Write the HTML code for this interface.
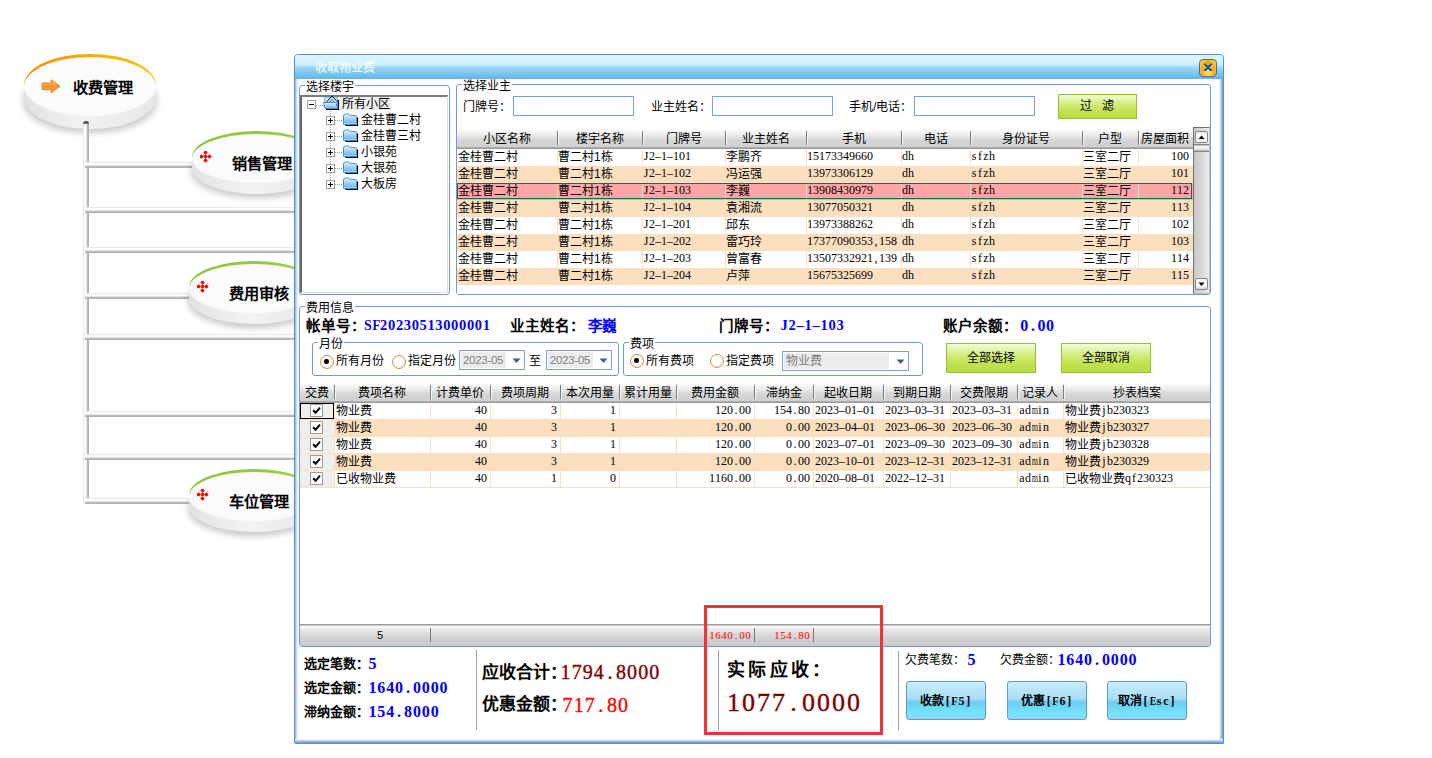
<!DOCTYPE html><html lang="zh-CN"><head><meta charset="utf-8"><title>收取物业费</title><style>
*{margin:0;padding:0;box-sizing:border-box}
html,body{width:1432px;height:758px;overflow:hidden;background:#fff}
body{position:relative;font-family:"Liberation Sans",sans-serif;font-size:12px;color:#000}
div{position:absolute}
.t{white-space:nowrap;line-height:14px;font-size:12px}
.m{font-family:"Liberation Mono",monospace;font-size:11px;letter-spacing:-0.6px;white-space:nowrap;line-height:14px}
.b{font-weight:bold}
.sm{font-family:"Liberation Serif",serif;white-space:nowrap}
.sm i{font-style:normal;display:inline-block;text-align:center}
.hp{height:6px;background:linear-gradient(#dcdcdc 0,#fbfbfb 20%,#fff 45%,#bdbdbd 75%,#a9a9a9 90%,#d8d8d8 100%)}
.vp{width:6px;background:linear-gradient(90deg,#dcdcdc 0,#fbfbfb 20%,#fff 45%,#bdbdbd 75%,#a9a9a9 90%,#d8d8d8 100%)}
.grp{border:1px solid #6d9bd6;border-radius:3px}
.lbl{background:#fff;padding:0 1px;line-height:13px}
.inp{border:1px solid #7aa2d6;background:#fff}
.gbtn{border:1px solid #8fc13a;background:linear-gradient(#f4fbd8 0,#d6ee86 35%,#c2e24e 70%,#b8dc3c 100%);text-align:center;line-height:22px}
.hdr{background:linear-gradient(#fefefe 0,#ececec 30%,#d6d6d6 55%,#d0d0d0 calc(100% - 2px),#c0c0c0 calc(100% - 2px),#9a9a9a calc(100% - 1px),#9a9a9a 100%)}
.sep{width:1px;background:#7a7a7a}
.bbtn{border:1px solid #5b9ad6;border-radius:3px;background:linear-gradient(#c9ecfb 0,#a9def8 45%,#6ccdf0 55%,#74e4fb 85%,#90d7f5 100%);text-align:center;font-weight:bold;line-height:36px}
</style></head><body>
<div style="left:4px;top:48px;width:172px;height:109px"><svg width="172" height="109" viewBox="0 0 172 109">
<defs>
<filter id="fg54" x="-20%" y="-40%" width="140%" height="180%"><feGaussianBlur stdDeviation="3.5"/></filter>
<linearGradient id="sg54" x1="0" y1="0" x2="1" y2="0"><stop offset="0" stop-color="#e2e2e2"/><stop offset="0.45" stop-color="#f3f3f3"/><stop offset="1" stop-color="#e6e6e6"/></linearGradient>
<linearGradient id="rg54" x1="0" y1="0" x2="1" y2="0"><stop offset="0" stop-color="#f29000"/><stop offset="1" stop-color="#ffc400"/></linearGradient>
</defs>
<ellipse cx="86.0" cy="53" rx="67.0" ry="32" fill="#000" opacity="0.22" filter="url(#fg54)"/>
<ellipse cx="86.0" cy="50" rx="66.0" ry="31" fill="url(#sg54)"/>
<rect x="20.0" y="37" width="132" height="13" fill="url(#sg54)"/>
<path d="M 20.0 37 A 66.0 31 0 0 1 152.0 37 Z" fill="url(#rg54)"/>
<ellipse cx="86.0" cy="38.5" rx="66.0" ry="29.5" fill="#fbfbfb"/>
</svg></div>
<div class="t b" style="left:73px;top:79px;font-size:15.2px;line-height:17px">收费管理</div>
<div style="left:41px;top:79px;width:22px;height:16px"><svg width="22" height="16" viewBox="0 0 22 16"><defs><linearGradient id="ag" x1="0" y1="0" x2="0" y2="1"><stop offset="0" stop-color="#fdc07a"/><stop offset="0.5" stop-color="#f8932a"/><stop offset="1" stop-color="#f7a458"/></linearGradient></defs><path d="M1.2 4 H10.2 V0.8 L18.9 7.3 L10.2 13.8 V10.6 H1.2 Z" fill="url(#ag)" stroke="#ea7c1e" stroke-width="1"/></svg></div>
<div class="vp" style="left:83px;top:121px;width:6px;height:383px;border-radius:3px 3px 0 0"></div>
<div style="left:83px;top:121px;width:6px;height:3px;background:linear-gradient(#333,#777);border-radius:3px 3px 0 0"></div>
<div class="hp" style="left:85px;top:162px;width:211px;height:6px;"></div>
<div class="hp" style="left:85px;top:207px;width:211px;height:6px;"></div>
<div class="hp" style="left:85px;top:247px;width:211px;height:6px;"></div>
<div class="hp" style="left:85px;top:293px;width:211px;height:6px;"></div>
<div class="hp" style="left:85px;top:334px;width:211px;height:6px;"></div>
<div class="hp" style="left:85px;top:411px;width:211px;height:6px;"></div>
<div class="hp" style="left:85px;top:454px;width:211px;height:6px;"></div>
<div class="hp" style="left:85px;top:498px;width:211px;height:6px;"></div>
<div style="left:172px;top:125px;width:170px;height:97px"><svg width="170" height="97" viewBox="0 0 170 97">
<defs>
<filter id="fg131" x="-20%" y="-40%" width="140%" height="180%"><feGaussianBlur stdDeviation="3.5"/></filter>
<linearGradient id="sg131" x1="0" y1="0" x2="1" y2="0"><stop offset="0" stop-color="#e2e2e2"/><stop offset="0.45" stop-color="#f3f3f3"/><stop offset="1" stop-color="#e6e6e6"/></linearGradient>
<linearGradient id="rg131" x1="0" y1="0" x2="1" y2="0"><stop offset="0" stop-color="#8bc43a"/><stop offset="1" stop-color="#9fce4a"/></linearGradient>
</defs>
<ellipse cx="85.0" cy="46" rx="66.0" ry="27" fill="#000" opacity="0.22" filter="url(#fg131)"/>
<ellipse cx="85.0" cy="43" rx="65.0" ry="26" fill="url(#sg131)"/>
<rect x="20.0" y="32" width="130" height="11" fill="url(#sg131)"/>
<path d="M 20.0 32 A 65.0 26 0 0 1 150.0 32 Z" fill="url(#rg131)"/>
<ellipse cx="85.0" cy="33.5" rx="65.0" ry="24.5" fill="#fbfbfb"/>
</svg></div>
<div class="t b" style="left:232px;top:155px;font-size:15.2px;line-height:17px">销售管理</div>
<div style="left:200px;top:151px;width:12px;height:12px"><svg width="12" height="12" viewBox="0 0 12 12"><g fill="#f00"><path d="M5.5 -0.7000000000000002 L7.7 1.5 L5.5 3.7 L3.3 1.5 Z"/><circle cx="5.5" cy="1.5" r="1.35"/><path d="M5.5 3.3 L7.7 5.5 L5.5 7.7 L3.3 5.5 Z"/><circle cx="5.5" cy="5.5" r="1.35"/><path d="M5.5 7.3 L7.7 9.5 L5.5 11.7 L3.3 9.5 Z"/><circle cx="5.5" cy="9.5" r="1.35"/><path d="M1.5 3.3 L3.7 5.5 L1.5 7.7 L-0.7000000000000002 5.5 Z"/><circle cx="1.5" cy="5.5" r="1.35"/><path d="M9.5 3.3 L11.7 5.5 L9.5 7.7 L7.3 5.5 Z"/><circle cx="9.5" cy="5.5" r="1.35"/></g></svg></div>
<div style="left:169px;top:255px;width:170px;height:97px"><svg width="170" height="97" viewBox="0 0 170 97">
<defs>
<filter id="fg261" x="-20%" y="-40%" width="140%" height="180%"><feGaussianBlur stdDeviation="3.5"/></filter>
<linearGradient id="sg261" x1="0" y1="0" x2="1" y2="0"><stop offset="0" stop-color="#e2e2e2"/><stop offset="0.45" stop-color="#f3f3f3"/><stop offset="1" stop-color="#e6e6e6"/></linearGradient>
<linearGradient id="rg261" x1="0" y1="0" x2="1" y2="0"><stop offset="0" stop-color="#8bc43a"/><stop offset="1" stop-color="#9fce4a"/></linearGradient>
</defs>
<ellipse cx="85.0" cy="46" rx="66.0" ry="27" fill="#000" opacity="0.22" filter="url(#fg261)"/>
<ellipse cx="85.0" cy="43" rx="65.0" ry="26" fill="url(#sg261)"/>
<rect x="20.0" y="32" width="130" height="11" fill="url(#sg261)"/>
<path d="M 20.0 32 A 65.0 26 0 0 1 150.0 32 Z" fill="url(#rg261)"/>
<ellipse cx="85.0" cy="33.5" rx="65.0" ry="24.5" fill="#fbfbfb"/>
</svg></div>
<div class="t b" style="left:229px;top:285px;font-size:15.2px;line-height:17px">费用审核</div>
<div style="left:197px;top:281px;width:12px;height:12px"><svg width="12" height="12" viewBox="0 0 12 12"><g fill="#f00"><path d="M5.5 -0.7000000000000002 L7.7 1.5 L5.5 3.7 L3.3 1.5 Z"/><circle cx="5.5" cy="1.5" r="1.35"/><path d="M5.5 3.3 L7.7 5.5 L5.5 7.7 L3.3 5.5 Z"/><circle cx="5.5" cy="5.5" r="1.35"/><path d="M5.5 7.3 L7.7 9.5 L5.5 11.7 L3.3 9.5 Z"/><circle cx="5.5" cy="9.5" r="1.35"/><path d="M1.5 3.3 L3.7 5.5 L1.5 7.7 L-0.7000000000000002 5.5 Z"/><circle cx="1.5" cy="5.5" r="1.35"/><path d="M9.5 3.3 L11.7 5.5 L9.5 7.7 L7.3 5.5 Z"/><circle cx="9.5" cy="5.5" r="1.35"/></g></svg></div>
<div style="left:169px;top:463px;width:170px;height:97px"><svg width="170" height="97" viewBox="0 0 170 97">
<defs>
<filter id="fg469" x="-20%" y="-40%" width="140%" height="180%"><feGaussianBlur stdDeviation="3.5"/></filter>
<linearGradient id="sg469" x1="0" y1="0" x2="1" y2="0"><stop offset="0" stop-color="#e2e2e2"/><stop offset="0.45" stop-color="#f3f3f3"/><stop offset="1" stop-color="#e6e6e6"/></linearGradient>
<linearGradient id="rg469" x1="0" y1="0" x2="1" y2="0"><stop offset="0" stop-color="#8bc43a"/><stop offset="1" stop-color="#9fce4a"/></linearGradient>
</defs>
<ellipse cx="85.0" cy="46" rx="66.0" ry="27" fill="#000" opacity="0.22" filter="url(#fg469)"/>
<ellipse cx="85.0" cy="43" rx="65.0" ry="26" fill="url(#sg469)"/>
<rect x="20.0" y="32" width="130" height="11" fill="url(#sg469)"/>
<path d="M 20.0 32 A 65.0 26 0 0 1 150.0 32 Z" fill="url(#rg469)"/>
<ellipse cx="85.0" cy="33.5" rx="65.0" ry="24.5" fill="#fbfbfb"/>
</svg></div>
<div class="t b" style="left:229px;top:493px;font-size:15.2px;line-height:17px">车位管理</div>
<div style="left:197px;top:489px;width:12px;height:12px"><svg width="12" height="12" viewBox="0 0 12 12"><g fill="#f00"><path d="M5.5 -0.7000000000000002 L7.7 1.5 L5.5 3.7 L3.3 1.5 Z"/><circle cx="5.5" cy="1.5" r="1.35"/><path d="M5.5 3.3 L7.7 5.5 L5.5 7.7 L3.3 5.5 Z"/><circle cx="5.5" cy="5.5" r="1.35"/><path d="M5.5 7.3 L7.7 9.5 L5.5 11.7 L3.3 9.5 Z"/><circle cx="5.5" cy="9.5" r="1.35"/><path d="M1.5 3.3 L3.7 5.5 L1.5 7.7 L-0.7000000000000002 5.5 Z"/><circle cx="1.5" cy="5.5" r="1.35"/><path d="M9.5 3.3 L11.7 5.5 L9.5 7.7 L7.3 5.5 Z"/><circle cx="9.5" cy="5.5" r="1.35"/></g></svg></div>
<div style="left:294px;top:54px;width:930px;height:690px;border:1px solid #5a8dd0;border-radius:4px 4px 0 2px;background:linear-gradient(90deg,#8ab0de 0,#b8cfee 1px,#dde8f7 2px,#f6f9fd 3px,#fff 4px,#fff calc(100% - 4px),#dfe8f4 calc(100% - 3px),#b9cce6 calc(100% - 2px),#8ea8cc calc(100% - 1px),#7e9fcc 100%)"></div>
<div style="left:295px;top:739px;width:928px;height:4px;background:linear-gradient(#eef3fa 0,#eef3fa 1px,#c8d7ec 1px,#c8d7ec 2px,#9fb5d8 2px,#9fb5d8 3px,#7f9fcc 3px)"></div>
<div style="left:295px;top:55px;width:928px;height:24px;border-radius:3px 3px 0 0;background:linear-gradient(#e6faff 0,#d6f4fd 1px,#d2f2fc 30%,#c6eaf9 45.8%,#aadcf6 45.8%,#8ccdf1 65%,#6fbeec 88%,#5fb3e8 100%)"></div>
<div class="t" style="left:315px;top:61px;color:#fff;font-size:12px">收取物业费</div>
<div style="left:1199px;top:59px;width:18px;height:18px;border:1px solid #3d6fb0;border-radius:4px;background:radial-gradient(ellipse at 50% 100%,#fff03a 0,#ffc400 35%,#f9a800 60%,#fdd98a 100%)"><svg width="16" height="16" viewBox="0 0 16 16" style="position:absolute;left:0;top:0"><path d="M4.5 5 L11.5 12 M11.5 5 L4.5 12" stroke="#fff" stroke-width="2.2"/><path d="M4.5 4 L11.5 11 M11.5 4 L4.5 11" stroke="#1f4f8f" stroke-width="2.2"/></svg></div>
<div class="grp" style="left:299px;top:85px;width:151px;height:210px;"></div>
<div class="t lbl" style="left:305px;top:81px;">选择楼宇</div>
<div style="left:300px;top:95px;width:148px;height:198px;border-top:2px solid #7a7a7a;border-left:2px solid #6a6a6a;border-right:1px solid #dcdcdc;border-bottom:1px solid #dcdcdc;background:#fff"></div>
<div style="left:311px;top:109px;width:1px;height:1px"></div>
<div style="left:330px;top:111px;width:1px;height:1px;background:#a0a0a0"></div>
<div style="left:330px;top:113px;width:1px;height:1px;background:#a0a0a0"></div>
<div style="left:330px;top:115px;width:1px;height:1px;background:#a0a0a0"></div>
<div style="left:330px;top:117px;width:1px;height:1px;background:#a0a0a0"></div>
<div style="left:330px;top:119px;width:1px;height:1px;background:#a0a0a0"></div>
<div style="left:330px;top:121px;width:1px;height:1px;background:#a0a0a0"></div>
<div style="left:330px;top:123px;width:1px;height:1px;background:#a0a0a0"></div>
<div style="left:330px;top:125px;width:1px;height:1px;background:#a0a0a0"></div>
<div style="left:330px;top:127px;width:1px;height:1px;background:#a0a0a0"></div>
<div style="left:330px;top:129px;width:1px;height:1px;background:#a0a0a0"></div>
<div style="left:330px;top:131px;width:1px;height:1px;background:#a0a0a0"></div>
<div style="left:330px;top:133px;width:1px;height:1px;background:#a0a0a0"></div>
<div style="left:330px;top:135px;width:1px;height:1px;background:#a0a0a0"></div>
<div style="left:330px;top:137px;width:1px;height:1px;background:#a0a0a0"></div>
<div style="left:330px;top:139px;width:1px;height:1px;background:#a0a0a0"></div>
<div style="left:330px;top:141px;width:1px;height:1px;background:#a0a0a0"></div>
<div style="left:330px;top:143px;width:1px;height:1px;background:#a0a0a0"></div>
<div style="left:330px;top:145px;width:1px;height:1px;background:#a0a0a0"></div>
<div style="left:330px;top:147px;width:1px;height:1px;background:#a0a0a0"></div>
<div style="left:330px;top:149px;width:1px;height:1px;background:#a0a0a0"></div>
<div style="left:330px;top:151px;width:1px;height:1px;background:#a0a0a0"></div>
<div style="left:330px;top:153px;width:1px;height:1px;background:#a0a0a0"></div>
<div style="left:330px;top:155px;width:1px;height:1px;background:#a0a0a0"></div>
<div style="left:330px;top:157px;width:1px;height:1px;background:#a0a0a0"></div>
<div style="left:330px;top:159px;width:1px;height:1px;background:#a0a0a0"></div>
<div style="left:330px;top:161px;width:1px;height:1px;background:#a0a0a0"></div>
<div style="left:330px;top:163px;width:1px;height:1px;background:#a0a0a0"></div>
<div style="left:330px;top:165px;width:1px;height:1px;background:#a0a0a0"></div>
<div style="left:330px;top:167px;width:1px;height:1px;background:#a0a0a0"></div>
<div style="left:330px;top:169px;width:1px;height:1px;background:#a0a0a0"></div>
<div style="left:330px;top:171px;width:1px;height:1px;background:#a0a0a0"></div>
<div style="left:330px;top:173px;width:1px;height:1px;background:#a0a0a0"></div>
<div style="left:330px;top:175px;width:1px;height:1px;background:#a0a0a0"></div>
<div style="left:330px;top:177px;width:1px;height:1px;background:#a0a0a0"></div>
<div style="left:330px;top:179px;width:1px;height:1px;background:#a0a0a0"></div>
<div style="left:330px;top:181px;width:1px;height:1px;background:#a0a0a0"></div>
<div style="left:330px;top:183px;width:1px;height:1px;background:#a0a0a0"></div>
<div style="left:316px;top:105px;width:1px;height:1px;background:#a0a0a0"></div>
<div style="left:318px;top:105px;width:1px;height:1px;background:#a0a0a0"></div>
<div style="left:320px;top:105px;width:1px;height:1px;background:#a0a0a0"></div>
<div style="left:322px;top:105px;width:1px;height:1px;background:#a0a0a0"></div>
<div style="left:335px;top:120px;width:1px;height:1px;background:#a0a0a0"></div>
<div style="left:337px;top:120px;width:1px;height:1px;background:#a0a0a0"></div>
<div style="left:339px;top:120px;width:1px;height:1px;background:#a0a0a0"></div>
<div style="left:341px;top:120px;width:1px;height:1px;background:#a0a0a0"></div>
<div style="left:335px;top:136px;width:1px;height:1px;background:#a0a0a0"></div>
<div style="left:337px;top:136px;width:1px;height:1px;background:#a0a0a0"></div>
<div style="left:339px;top:136px;width:1px;height:1px;background:#a0a0a0"></div>
<div style="left:341px;top:136px;width:1px;height:1px;background:#a0a0a0"></div>
<div style="left:335px;top:152px;width:1px;height:1px;background:#a0a0a0"></div>
<div style="left:337px;top:152px;width:1px;height:1px;background:#a0a0a0"></div>
<div style="left:339px;top:152px;width:1px;height:1px;background:#a0a0a0"></div>
<div style="left:341px;top:152px;width:1px;height:1px;background:#a0a0a0"></div>
<div style="left:335px;top:168px;width:1px;height:1px;background:#a0a0a0"></div>
<div style="left:337px;top:168px;width:1px;height:1px;background:#a0a0a0"></div>
<div style="left:339px;top:168px;width:1px;height:1px;background:#a0a0a0"></div>
<div style="left:341px;top:168px;width:1px;height:1px;background:#a0a0a0"></div>
<div style="left:335px;top:184px;width:1px;height:1px;background:#a0a0a0"></div>
<div style="left:337px;top:184px;width:1px;height:1px;background:#a0a0a0"></div>
<div style="left:339px;top:184px;width:1px;height:1px;background:#a0a0a0"></div>
<div style="left:341px;top:184px;width:1px;height:1px;background:#a0a0a0"></div>
<div style="left:307px;top:100px;width:9px;height:9px;border:1px solid #a0a0a0;background:#fff"></div>
<div style="left:309px;top:104px;width:5px;height:1px;background:#000"></div>
<div style="left:323px;top:95px;width:17px;height:16px"><svg width="17" height="16" viewBox="0 0 17 16"><defs><linearGradient id="fo" x1="0" y1="0" x2="0" y2="1"><stop offset="0" stop-color="#e6f3fd"/><stop offset="0.5" stop-color="#a9d2f6"/><stop offset="1" stop-color="#6fb2ea"/></linearGradient></defs><path d="M3 14.5 H15.5 V5" stroke="#000" stroke-width="1.2" fill="none"/><path d="M1.5 3.5 Q1.5 2 3 2 H13 Q14.5 2 14.5 3.5 V13.5 H2.5 Z" fill="#d8ecfb" stroke="#5a9ddf"/><path d="M0.5 7.5 H13 L14.5 13.5 H2 Z" fill="url(#fo)" stroke="#4a8fd6"/><path d="M3.5 7 L9 1 L14.5 7" fill="none" stroke="#111" stroke-width="1"/><g fill="#14a0a0"><rect x="8" y="4" width="1.5" height="1.5"/><rect x="6.5" y="5.5" width="1.5" height="1.5"/><rect x="9.5" y="5.5" width="1.5" height="1.5"/></g></svg></div>
<div style="left:340px;top:97px;width:51px;height:13px;background:#ececec"></div>
<div class="t" style="left:342px;top:97px;">所有小区</div>
<div style="left:326px;top:116px;width:9px;height:9px;border:1px solid #a0a0a0;background:#fff"></div>
<div style="left:328px;top:120px;width:5px;height:1px;background:#000"></div>
<div style="left:330px;top:118px;width:1px;height:5px;background:#000"></div>
<div style="left:343px;top:113px;width:16px;height:14px"><svg width="16" height="14" viewBox="0 0 16 14"><defs><linearGradient id="fc0" x1="0" y1="0" x2="0" y2="1"><stop offset="0" stop-color="#eaf5fe"/><stop offset="0.45" stop-color="#a9d2f6"/><stop offset="0.8" stop-color="#7dbdf0"/><stop offset="1" stop-color="#a6e2fb"/></linearGradient></defs><path d="M2.5 12.5 H14.5 V4.5" stroke="#000" stroke-width="1.2" fill="none"/><path d="M0.5 3 Q0.5 1 2.5 1 H6 L7.5 2.5 H12.5 Q13.5 2.5 13.5 3.5 V11.5 H0.5 Z" fill="url(#fc0)" stroke="#4a8fd6"/></svg></div>
<div class="t" style="left:361px;top:113px;">金桂曹二村</div>
<div style="left:326px;top:132px;width:9px;height:9px;border:1px solid #a0a0a0;background:#fff"></div>
<div style="left:328px;top:136px;width:5px;height:1px;background:#000"></div>
<div style="left:330px;top:134px;width:1px;height:5px;background:#000"></div>
<div style="left:343px;top:129px;width:16px;height:14px"><svg width="16" height="14" viewBox="0 0 16 14"><defs><linearGradient id="fc1" x1="0" y1="0" x2="0" y2="1"><stop offset="0" stop-color="#eaf5fe"/><stop offset="0.45" stop-color="#a9d2f6"/><stop offset="0.8" stop-color="#7dbdf0"/><stop offset="1" stop-color="#a6e2fb"/></linearGradient></defs><path d="M2.5 12.5 H14.5 V4.5" stroke="#000" stroke-width="1.2" fill="none"/><path d="M0.5 3 Q0.5 1 2.5 1 H6 L7.5 2.5 H12.5 Q13.5 2.5 13.5 3.5 V11.5 H0.5 Z" fill="url(#fc1)" stroke="#4a8fd6"/></svg></div>
<div class="t" style="left:361px;top:129px;">金桂曹三村</div>
<div style="left:326px;top:148px;width:9px;height:9px;border:1px solid #a0a0a0;background:#fff"></div>
<div style="left:328px;top:152px;width:5px;height:1px;background:#000"></div>
<div style="left:330px;top:150px;width:1px;height:5px;background:#000"></div>
<div style="left:343px;top:145px;width:16px;height:14px"><svg width="16" height="14" viewBox="0 0 16 14"><defs><linearGradient id="fc2" x1="0" y1="0" x2="0" y2="1"><stop offset="0" stop-color="#eaf5fe"/><stop offset="0.45" stop-color="#a9d2f6"/><stop offset="0.8" stop-color="#7dbdf0"/><stop offset="1" stop-color="#a6e2fb"/></linearGradient></defs><path d="M2.5 12.5 H14.5 V4.5" stroke="#000" stroke-width="1.2" fill="none"/><path d="M0.5 3 Q0.5 1 2.5 1 H6 L7.5 2.5 H12.5 Q13.5 2.5 13.5 3.5 V11.5 H0.5 Z" fill="url(#fc2)" stroke="#4a8fd6"/></svg></div>
<div class="t" style="left:361px;top:145px;">小银苑</div>
<div style="left:326px;top:164px;width:9px;height:9px;border:1px solid #a0a0a0;background:#fff"></div>
<div style="left:328px;top:168px;width:5px;height:1px;background:#000"></div>
<div style="left:330px;top:166px;width:1px;height:5px;background:#000"></div>
<div style="left:343px;top:161px;width:16px;height:14px"><svg width="16" height="14" viewBox="0 0 16 14"><defs><linearGradient id="fc3" x1="0" y1="0" x2="0" y2="1"><stop offset="0" stop-color="#eaf5fe"/><stop offset="0.45" stop-color="#a9d2f6"/><stop offset="0.8" stop-color="#7dbdf0"/><stop offset="1" stop-color="#a6e2fb"/></linearGradient></defs><path d="M2.5 12.5 H14.5 V4.5" stroke="#000" stroke-width="1.2" fill="none"/><path d="M0.5 3 Q0.5 1 2.5 1 H6 L7.5 2.5 H12.5 Q13.5 2.5 13.5 3.5 V11.5 H0.5 Z" fill="url(#fc3)" stroke="#4a8fd6"/></svg></div>
<div class="t" style="left:361px;top:161px;">大银苑</div>
<div style="left:326px;top:180px;width:9px;height:9px;border:1px solid #a0a0a0;background:#fff"></div>
<div style="left:328px;top:184px;width:5px;height:1px;background:#000"></div>
<div style="left:330px;top:182px;width:1px;height:5px;background:#000"></div>
<div style="left:343px;top:177px;width:16px;height:14px"><svg width="16" height="14" viewBox="0 0 16 14"><defs><linearGradient id="fc4" x1="0" y1="0" x2="0" y2="1"><stop offset="0" stop-color="#eaf5fe"/><stop offset="0.45" stop-color="#a9d2f6"/><stop offset="0.8" stop-color="#7dbdf0"/><stop offset="1" stop-color="#a6e2fb"/></linearGradient></defs><path d="M2.5 12.5 H14.5 V4.5" stroke="#000" stroke-width="1.2" fill="none"/><path d="M0.5 3 Q0.5 1 2.5 1 H6 L7.5 2.5 H12.5 Q13.5 2.5 13.5 3.5 V11.5 H0.5 Z" fill="url(#fc4)" stroke="#4a8fd6"/></svg></div>
<div class="t" style="left:361px;top:177px;">大板房</div>
<div class="grp" style="left:456px;top:84px;width:755px;height:211px;"></div>
<div class="t lbl" style="left:462px;top:80px;">选择业主</div>
<div class="t" style="left:463px;top:100px;">门牌号：</div>
<div class="inp" style="left:513px;top:96px;width:121px;height:20px;"></div>
<div class="t" style="left:651px;top:100px;">业主姓名：</div>
<div class="inp" style="left:712px;top:96px;width:121px;height:20px;"></div>
<div class="t" style="left:849px;top:100px;">手机/电话：</div>
<div class="inp" style="left:914px;top:96px;width:121px;height:20px;"></div>
<div class="gbtn" style="left:1058px;top:94px;width:79px;height:25px;">过&nbsp;&nbsp;&nbsp;滤</div>
<div style="left:457px;top:127px;width:753px;height:167px;background:#fff"></div>
<div class="hdr" style="left:457px;top:129px;width:736px;height:20px;"></div>
<div class="t" style="left:457px;top:132px;width:100px;text-align:center">小区名称</div>
<div class="sep" style="left:557px;top:131px;width:1px;height:14px;"></div>
<div style="left:558px;top:131px;width:1px;height:14px;background:rgba(255,255,255,0.8)"></div>
<div class="t" style="left:557px;top:132px;width:85px;text-align:center">楼宇名称</div>
<div class="sep" style="left:642px;top:131px;width:1px;height:14px;"></div>
<div style="left:643px;top:131px;width:1px;height:14px;background:rgba(255,255,255,0.8)"></div>
<div class="t" style="left:642px;top:132px;width:83px;text-align:center">门牌号</div>
<div class="sep" style="left:725px;top:131px;width:1px;height:14px;"></div>
<div style="left:726px;top:131px;width:1px;height:14px;background:rgba(255,255,255,0.8)"></div>
<div class="t" style="left:725px;top:132px;width:81px;text-align:center">业主姓名</div>
<div class="sep" style="left:806px;top:131px;width:1px;height:14px;"></div>
<div style="left:807px;top:131px;width:1px;height:14px;background:rgba(255,255,255,0.8)"></div>
<div class="t" style="left:806px;top:132px;width:95px;text-align:center">手机</div>
<div class="sep" style="left:901px;top:131px;width:1px;height:14px;"></div>
<div style="left:902px;top:131px;width:1px;height:14px;background:rgba(255,255,255,0.8)"></div>
<div class="t" style="left:901px;top:132px;width:69px;text-align:center">电话</div>
<div class="sep" style="left:970px;top:131px;width:1px;height:14px;"></div>
<div style="left:971px;top:131px;width:1px;height:14px;background:rgba(255,255,255,0.8)"></div>
<div class="t" style="left:970px;top:132px;width:112px;text-align:center">身份证号</div>
<div class="sep" style="left:1082px;top:131px;width:1px;height:14px;"></div>
<div style="left:1083px;top:131px;width:1px;height:14px;background:rgba(255,255,255,0.8)"></div>
<div class="t" style="left:1082px;top:132px;width:56px;text-align:center">户型</div>
<div class="sep" style="left:1138px;top:131px;width:1px;height:14px;"></div>
<div style="left:1139px;top:131px;width:1px;height:14px;background:rgba(255,255,255,0.8)"></div>
<div class="t" style="left:1138px;top:132px;width:54px;text-align:center">房屋面积</div>
<div style="left:457px;top:149px;width:736px;height:17px;background:#fff"></div>
<div style="left:557px;top:149px;width:1px;height:17px;background:#fbdfbf"></div>
<div style="left:642px;top:149px;width:1px;height:17px;background:#fbdfbf"></div>
<div style="left:725px;top:149px;width:1px;height:17px;background:#fbdfbf"></div>
<div style="left:806px;top:149px;width:1px;height:17px;background:#fbdfbf"></div>
<div style="left:901px;top:149px;width:1px;height:17px;background:#fbdfbf"></div>
<div style="left:970px;top:149px;width:1px;height:17px;background:#fbdfbf"></div>
<div style="left:1082px;top:149px;width:1px;height:17px;background:#fbdfbf"></div>
<div style="left:1138px;top:149px;width:1px;height:17px;background:#fbdfbf"></div>
<div class="t" style="left:458px;top:150px;">金桂曹二村</div>
<div class="t" style="left:558px;top:150px;">曹二村1栋</div>
<div style="left:643px;top:149px;width:82px;height:17px;overflow:hidden">
<div class="sm" style="left:0px;top:0px;font-size:12px;line-height:14px;"><i style="width:6px">J</i><i style="width:6px">2</i><i style="width:6px">–</i><i style="width:6px">1</i><i style="width:6px">–</i><i style="width:6px">1</i><i style="width:6px">0</i><i style="width:6px">1</i></div>
</div>
<div class="t" style="left:726px;top:150px;">李鹏齐</div>
<div style="left:807px;top:149px;width:94px;height:17px;overflow:hidden">
<div class="sm" style="left:0px;top:0px;font-size:12px;line-height:14px;"><i style="width:6px">1</i><i style="width:6px">5</i><i style="width:6px">1</i><i style="width:6px">7</i><i style="width:6px">3</i><i style="width:6px">3</i><i style="width:6px">4</i><i style="width:6px">9</i><i style="width:6px">6</i><i style="width:6px">6</i><i style="width:6px">0</i></div>
</div>
<div style="left:902px;top:149px;width:68px;height:17px;overflow:hidden">
<div class="sm" style="left:0px;top:0px;font-size:12px;line-height:14px;"><i style="width:6px">d</i><i style="width:6px">h</i></div>
</div>
<div style="left:971px;top:149px;width:111px;height:17px;overflow:hidden">
<div class="sm" style="left:0px;top:0px;font-size:12px;line-height:14px;"><i style="width:6px">s</i><i style="width:6px">f</i><i style="width:6px">z</i><i style="width:6px">h</i></div>
</div>
<div class="t" style="left:1083px;top:150px;">三室二厅</div>
<div class="sm" style="left:1171px;top:149px;font-size:12px;line-height:14px;"><i style="width:6px">1</i><i style="width:6px">0</i><i style="width:6px">0</i></div>
<div style="left:457px;top:166px;width:736px;height:17px;background:#fbdfbf"></div>
<div style="left:557px;top:166px;width:1px;height:17px;background:#fbdfbf"></div>
<div style="left:642px;top:166px;width:1px;height:17px;background:#fbdfbf"></div>
<div style="left:725px;top:166px;width:1px;height:17px;background:#fbdfbf"></div>
<div style="left:806px;top:166px;width:1px;height:17px;background:#fbdfbf"></div>
<div style="left:901px;top:166px;width:1px;height:17px;background:#fbdfbf"></div>
<div style="left:970px;top:166px;width:1px;height:17px;background:#fbdfbf"></div>
<div style="left:1082px;top:166px;width:1px;height:17px;background:#fbdfbf"></div>
<div style="left:1138px;top:166px;width:1px;height:17px;background:#fbdfbf"></div>
<div class="t" style="left:458px;top:167px;">金桂曹二村</div>
<div class="t" style="left:558px;top:167px;">曹二村1栋</div>
<div style="left:643px;top:166px;width:82px;height:17px;overflow:hidden">
<div class="sm" style="left:0px;top:0px;font-size:12px;line-height:14px;"><i style="width:6px">J</i><i style="width:6px">2</i><i style="width:6px">–</i><i style="width:6px">1</i><i style="width:6px">–</i><i style="width:6px">1</i><i style="width:6px">0</i><i style="width:6px">2</i></div>
</div>
<div class="t" style="left:726px;top:167px;">冯运强</div>
<div style="left:807px;top:166px;width:94px;height:17px;overflow:hidden">
<div class="sm" style="left:0px;top:0px;font-size:12px;line-height:14px;"><i style="width:6px">1</i><i style="width:6px">3</i><i style="width:6px">9</i><i style="width:6px">7</i><i style="width:6px">3</i><i style="width:6px">3</i><i style="width:6px">0</i><i style="width:6px">6</i><i style="width:6px">1</i><i style="width:6px">2</i><i style="width:6px">9</i></div>
</div>
<div style="left:902px;top:166px;width:68px;height:17px;overflow:hidden">
<div class="sm" style="left:0px;top:0px;font-size:12px;line-height:14px;"><i style="width:6px">d</i><i style="width:6px">h</i></div>
</div>
<div style="left:971px;top:166px;width:111px;height:17px;overflow:hidden">
<div class="sm" style="left:0px;top:0px;font-size:12px;line-height:14px;"><i style="width:6px">s</i><i style="width:6px">f</i><i style="width:6px">z</i><i style="width:6px">h</i></div>
</div>
<div class="t" style="left:1083px;top:167px;">三室二厅</div>
<div class="sm" style="left:1171px;top:166px;font-size:12px;line-height:14px;"><i style="width:6px">1</i><i style="width:6px">0</i><i style="width:6px">1</i></div>
<div style="left:457px;top:183px;width:736px;height:17px;background:#ffa7a7"></div>
<div style="left:557px;top:183px;width:1px;height:17px;background:#fbdfbf"></div>
<div style="left:642px;top:183px;width:1px;height:17px;background:#fbdfbf"></div>
<div style="left:725px;top:183px;width:1px;height:17px;background:#fbdfbf"></div>
<div style="left:806px;top:183px;width:1px;height:17px;background:#fbdfbf"></div>
<div style="left:901px;top:183px;width:1px;height:17px;background:#fbdfbf"></div>
<div style="left:970px;top:183px;width:1px;height:17px;background:#fbdfbf"></div>
<div style="left:1082px;top:183px;width:1px;height:17px;background:#fbdfbf"></div>
<div style="left:1138px;top:183px;width:1px;height:17px;background:#fbdfbf"></div>
<div style="left:457px;top:183px;width:735px;height:16px;border:1px solid #1f6464"></div>
<div style="left:557px;top:184px;width:1px;height:14px;background:#fbdfbf"></div>
<div style="left:642px;top:184px;width:1px;height:14px;background:#fbdfbf"></div>
<div style="left:725px;top:184px;width:1px;height:14px;background:#fbdfbf"></div>
<div style="left:806px;top:184px;width:1px;height:14px;background:#fbdfbf"></div>
<div style="left:901px;top:184px;width:1px;height:14px;background:#fbdfbf"></div>
<div style="left:970px;top:184px;width:1px;height:14px;background:#fbdfbf"></div>
<div style="left:1082px;top:184px;width:1px;height:14px;background:#fbdfbf"></div>
<div style="left:1138px;top:184px;width:1px;height:14px;background:#fbdfbf"></div>
<div class="t" style="left:458px;top:184px;">金桂曹二村</div>
<div class="t" style="left:558px;top:184px;">曹二村1栋</div>
<div style="left:643px;top:183px;width:82px;height:17px;overflow:hidden">
<div class="sm" style="left:0px;top:0px;font-size:12px;line-height:14px;"><i style="width:6px">J</i><i style="width:6px">2</i><i style="width:6px">–</i><i style="width:6px">1</i><i style="width:6px">–</i><i style="width:6px">1</i><i style="width:6px">0</i><i style="width:6px">3</i></div>
</div>
<div class="t" style="left:726px;top:184px;">李巍</div>
<div style="left:807px;top:183px;width:94px;height:17px;overflow:hidden">
<div class="sm" style="left:0px;top:0px;font-size:12px;line-height:14px;"><i style="width:6px">1</i><i style="width:6px">3</i><i style="width:6px">9</i><i style="width:6px">0</i><i style="width:6px">8</i><i style="width:6px">4</i><i style="width:6px">3</i><i style="width:6px">0</i><i style="width:6px">9</i><i style="width:6px">7</i><i style="width:6px">9</i></div>
</div>
<div style="left:902px;top:183px;width:68px;height:17px;overflow:hidden">
<div class="sm" style="left:0px;top:0px;font-size:12px;line-height:14px;"><i style="width:6px">d</i><i style="width:6px">h</i></div>
</div>
<div style="left:971px;top:183px;width:111px;height:17px;overflow:hidden">
<div class="sm" style="left:0px;top:0px;font-size:12px;line-height:14px;"><i style="width:6px">s</i><i style="width:6px">f</i><i style="width:6px">z</i><i style="width:6px">h</i></div>
</div>
<div class="t" style="left:1083px;top:184px;">三室二厅</div>
<div class="sm" style="left:1171px;top:183px;font-size:12px;line-height:14px;"><i style="width:6px">1</i><i style="width:6px">1</i><i style="width:6px">2</i></div>
<div style="left:457px;top:200px;width:736px;height:17px;background:#fbdfbf"></div>
<div style="left:557px;top:200px;width:1px;height:17px;background:#fbdfbf"></div>
<div style="left:642px;top:200px;width:1px;height:17px;background:#fbdfbf"></div>
<div style="left:725px;top:200px;width:1px;height:17px;background:#fbdfbf"></div>
<div style="left:806px;top:200px;width:1px;height:17px;background:#fbdfbf"></div>
<div style="left:901px;top:200px;width:1px;height:17px;background:#fbdfbf"></div>
<div style="left:970px;top:200px;width:1px;height:17px;background:#fbdfbf"></div>
<div style="left:1082px;top:200px;width:1px;height:17px;background:#fbdfbf"></div>
<div style="left:1138px;top:200px;width:1px;height:17px;background:#fbdfbf"></div>
<div class="t" style="left:458px;top:201px;">金桂曹二村</div>
<div class="t" style="left:558px;top:201px;">曹二村1栋</div>
<div style="left:643px;top:200px;width:82px;height:17px;overflow:hidden">
<div class="sm" style="left:0px;top:0px;font-size:12px;line-height:14px;"><i style="width:6px">J</i><i style="width:6px">2</i><i style="width:6px">–</i><i style="width:6px">1</i><i style="width:6px">–</i><i style="width:6px">1</i><i style="width:6px">0</i><i style="width:6px">4</i></div>
</div>
<div class="t" style="left:726px;top:201px;">袁湘流</div>
<div style="left:807px;top:200px;width:94px;height:17px;overflow:hidden">
<div class="sm" style="left:0px;top:0px;font-size:12px;line-height:14px;"><i style="width:6px">1</i><i style="width:6px">3</i><i style="width:6px">0</i><i style="width:6px">7</i><i style="width:6px">7</i><i style="width:6px">0</i><i style="width:6px">5</i><i style="width:6px">0</i><i style="width:6px">3</i><i style="width:6px">2</i><i style="width:6px">1</i></div>
</div>
<div style="left:902px;top:200px;width:68px;height:17px;overflow:hidden">
<div class="sm" style="left:0px;top:0px;font-size:12px;line-height:14px;"><i style="width:6px">d</i><i style="width:6px">h</i></div>
</div>
<div style="left:971px;top:200px;width:111px;height:17px;overflow:hidden">
<div class="sm" style="left:0px;top:0px;font-size:12px;line-height:14px;"><i style="width:6px">s</i><i style="width:6px">f</i><i style="width:6px">z</i><i style="width:6px">h</i></div>
</div>
<div class="t" style="left:1083px;top:201px;">三室二厅</div>
<div class="sm" style="left:1171px;top:200px;font-size:12px;line-height:14px;"><i style="width:6px">1</i><i style="width:6px">1</i><i style="width:6px">3</i></div>
<div style="left:457px;top:217px;width:736px;height:17px;background:#fff"></div>
<div style="left:557px;top:217px;width:1px;height:17px;background:#fbdfbf"></div>
<div style="left:642px;top:217px;width:1px;height:17px;background:#fbdfbf"></div>
<div style="left:725px;top:217px;width:1px;height:17px;background:#fbdfbf"></div>
<div style="left:806px;top:217px;width:1px;height:17px;background:#fbdfbf"></div>
<div style="left:901px;top:217px;width:1px;height:17px;background:#fbdfbf"></div>
<div style="left:970px;top:217px;width:1px;height:17px;background:#fbdfbf"></div>
<div style="left:1082px;top:217px;width:1px;height:17px;background:#fbdfbf"></div>
<div style="left:1138px;top:217px;width:1px;height:17px;background:#fbdfbf"></div>
<div class="t" style="left:458px;top:218px;">金桂曹二村</div>
<div class="t" style="left:558px;top:218px;">曹二村1栋</div>
<div style="left:643px;top:217px;width:82px;height:17px;overflow:hidden">
<div class="sm" style="left:0px;top:0px;font-size:12px;line-height:14px;"><i style="width:6px">J</i><i style="width:6px">2</i><i style="width:6px">–</i><i style="width:6px">1</i><i style="width:6px">–</i><i style="width:6px">2</i><i style="width:6px">0</i><i style="width:6px">1</i></div>
</div>
<div class="t" style="left:726px;top:218px;">邱东</div>
<div style="left:807px;top:217px;width:94px;height:17px;overflow:hidden">
<div class="sm" style="left:0px;top:0px;font-size:12px;line-height:14px;"><i style="width:6px">1</i><i style="width:6px">3</i><i style="width:6px">9</i><i style="width:6px">7</i><i style="width:6px">3</i><i style="width:6px">3</i><i style="width:6px">8</i><i style="width:6px">8</i><i style="width:6px">2</i><i style="width:6px">6</i><i style="width:6px">2</i></div>
</div>
<div style="left:902px;top:217px;width:68px;height:17px;overflow:hidden">
<div class="sm" style="left:0px;top:0px;font-size:12px;line-height:14px;"><i style="width:6px">d</i><i style="width:6px">h</i></div>
</div>
<div style="left:971px;top:217px;width:111px;height:17px;overflow:hidden">
<div class="sm" style="left:0px;top:0px;font-size:12px;line-height:14px;"><i style="width:6px">s</i><i style="width:6px">f</i><i style="width:6px">z</i><i style="width:6px">h</i></div>
</div>
<div class="t" style="left:1083px;top:218px;">三室二厅</div>
<div class="sm" style="left:1171px;top:217px;font-size:12px;line-height:14px;"><i style="width:6px">1</i><i style="width:6px">0</i><i style="width:6px">2</i></div>
<div style="left:457px;top:234px;width:736px;height:17px;background:#fbdfbf"></div>
<div style="left:557px;top:234px;width:1px;height:17px;background:#fbdfbf"></div>
<div style="left:642px;top:234px;width:1px;height:17px;background:#fbdfbf"></div>
<div style="left:725px;top:234px;width:1px;height:17px;background:#fbdfbf"></div>
<div style="left:806px;top:234px;width:1px;height:17px;background:#fbdfbf"></div>
<div style="left:901px;top:234px;width:1px;height:17px;background:#fbdfbf"></div>
<div style="left:970px;top:234px;width:1px;height:17px;background:#fbdfbf"></div>
<div style="left:1082px;top:234px;width:1px;height:17px;background:#fbdfbf"></div>
<div style="left:1138px;top:234px;width:1px;height:17px;background:#fbdfbf"></div>
<div class="t" style="left:458px;top:235px;">金桂曹二村</div>
<div class="t" style="left:558px;top:235px;">曹二村1栋</div>
<div style="left:643px;top:234px;width:82px;height:17px;overflow:hidden">
<div class="sm" style="left:0px;top:0px;font-size:12px;line-height:14px;"><i style="width:6px">J</i><i style="width:6px">2</i><i style="width:6px">–</i><i style="width:6px">1</i><i style="width:6px">–</i><i style="width:6px">2</i><i style="width:6px">0</i><i style="width:6px">2</i></div>
</div>
<div class="t" style="left:726px;top:235px;">雷巧玲</div>
<div style="left:807px;top:234px;width:94px;height:17px;overflow:hidden">
<div class="sm" style="left:0px;top:0px;font-size:12px;line-height:14px;"><i style="width:6px">1</i><i style="width:6px">7</i><i style="width:6px">3</i><i style="width:6px">7</i><i style="width:6px">7</i><i style="width:6px">0</i><i style="width:6px">9</i><i style="width:6px">0</i><i style="width:6px">3</i><i style="width:6px">5</i><i style="width:6px">3</i><i style="width:6px">,</i><i style="width:6px">1</i><i style="width:6px">5</i><i style="width:6px">8</i></div>
</div>
<div style="left:902px;top:234px;width:68px;height:17px;overflow:hidden">
<div class="sm" style="left:0px;top:0px;font-size:12px;line-height:14px;"><i style="width:6px">d</i><i style="width:6px">h</i></div>
</div>
<div style="left:971px;top:234px;width:111px;height:17px;overflow:hidden">
<div class="sm" style="left:0px;top:0px;font-size:12px;line-height:14px;"><i style="width:6px">s</i><i style="width:6px">f</i><i style="width:6px">z</i><i style="width:6px">h</i></div>
</div>
<div class="t" style="left:1083px;top:235px;">三室二厅</div>
<div class="sm" style="left:1171px;top:234px;font-size:12px;line-height:14px;"><i style="width:6px">1</i><i style="width:6px">0</i><i style="width:6px">3</i></div>
<div style="left:457px;top:251px;width:736px;height:17px;background:#fff"></div>
<div style="left:557px;top:251px;width:1px;height:17px;background:#fbdfbf"></div>
<div style="left:642px;top:251px;width:1px;height:17px;background:#fbdfbf"></div>
<div style="left:725px;top:251px;width:1px;height:17px;background:#fbdfbf"></div>
<div style="left:806px;top:251px;width:1px;height:17px;background:#fbdfbf"></div>
<div style="left:901px;top:251px;width:1px;height:17px;background:#fbdfbf"></div>
<div style="left:970px;top:251px;width:1px;height:17px;background:#fbdfbf"></div>
<div style="left:1082px;top:251px;width:1px;height:17px;background:#fbdfbf"></div>
<div style="left:1138px;top:251px;width:1px;height:17px;background:#fbdfbf"></div>
<div class="t" style="left:458px;top:252px;">金桂曹二村</div>
<div class="t" style="left:558px;top:252px;">曹二村1栋</div>
<div style="left:643px;top:251px;width:82px;height:17px;overflow:hidden">
<div class="sm" style="left:0px;top:0px;font-size:12px;line-height:14px;"><i style="width:6px">J</i><i style="width:6px">2</i><i style="width:6px">–</i><i style="width:6px">1</i><i style="width:6px">–</i><i style="width:6px">2</i><i style="width:6px">0</i><i style="width:6px">3</i></div>
</div>
<div class="t" style="left:726px;top:252px;">曾富春</div>
<div style="left:807px;top:251px;width:94px;height:17px;overflow:hidden">
<div class="sm" style="left:0px;top:0px;font-size:12px;line-height:14px;"><i style="width:6px">1</i><i style="width:6px">3</i><i style="width:6px">5</i><i style="width:6px">0</i><i style="width:6px">7</i><i style="width:6px">3</i><i style="width:6px">3</i><i style="width:6px">2</i><i style="width:6px">9</i><i style="width:6px">2</i><i style="width:6px">1</i><i style="width:6px">,</i><i style="width:6px">1</i><i style="width:6px">3</i><i style="width:6px">9</i></div>
</div>
<div style="left:902px;top:251px;width:68px;height:17px;overflow:hidden">
<div class="sm" style="left:0px;top:0px;font-size:12px;line-height:14px;"><i style="width:6px">d</i><i style="width:6px">h</i></div>
</div>
<div style="left:971px;top:251px;width:111px;height:17px;overflow:hidden">
<div class="sm" style="left:0px;top:0px;font-size:12px;line-height:14px;"><i style="width:6px">s</i><i style="width:6px">f</i><i style="width:6px">z</i><i style="width:6px">h</i></div>
</div>
<div class="t" style="left:1083px;top:252px;">三室二厅</div>
<div class="sm" style="left:1171px;top:251px;font-size:12px;line-height:14px;"><i style="width:6px">1</i><i style="width:6px">1</i><i style="width:6px">4</i></div>
<div style="left:457px;top:268px;width:736px;height:17px;background:#fbdfbf"></div>
<div style="left:557px;top:268px;width:1px;height:17px;background:#fbdfbf"></div>
<div style="left:642px;top:268px;width:1px;height:17px;background:#fbdfbf"></div>
<div style="left:725px;top:268px;width:1px;height:17px;background:#fbdfbf"></div>
<div style="left:806px;top:268px;width:1px;height:17px;background:#fbdfbf"></div>
<div style="left:901px;top:268px;width:1px;height:17px;background:#fbdfbf"></div>
<div style="left:970px;top:268px;width:1px;height:17px;background:#fbdfbf"></div>
<div style="left:1082px;top:268px;width:1px;height:17px;background:#fbdfbf"></div>
<div style="left:1138px;top:268px;width:1px;height:17px;background:#fbdfbf"></div>
<div class="t" style="left:458px;top:269px;">金桂曹二村</div>
<div class="t" style="left:558px;top:269px;">曹二村1栋</div>
<div style="left:643px;top:268px;width:82px;height:17px;overflow:hidden">
<div class="sm" style="left:0px;top:0px;font-size:12px;line-height:14px;"><i style="width:6px">J</i><i style="width:6px">2</i><i style="width:6px">–</i><i style="width:6px">1</i><i style="width:6px">–</i><i style="width:6px">2</i><i style="width:6px">0</i><i style="width:6px">4</i></div>
</div>
<div class="t" style="left:726px;top:269px;">卢萍</div>
<div style="left:807px;top:268px;width:94px;height:17px;overflow:hidden">
<div class="sm" style="left:0px;top:0px;font-size:12px;line-height:14px;"><i style="width:6px">1</i><i style="width:6px">5</i><i style="width:6px">6</i><i style="width:6px">7</i><i style="width:6px">5</i><i style="width:6px">3</i><i style="width:6px">2</i><i style="width:6px">5</i><i style="width:6px">6</i><i style="width:6px">9</i><i style="width:6px">9</i></div>
</div>
<div style="left:902px;top:268px;width:68px;height:17px;overflow:hidden">
<div class="sm" style="left:0px;top:0px;font-size:12px;line-height:14px;"><i style="width:6px">d</i><i style="width:6px">h</i></div>
</div>
<div style="left:971px;top:268px;width:111px;height:17px;overflow:hidden">
<div class="sm" style="left:0px;top:0px;font-size:12px;line-height:14px;"><i style="width:6px">s</i><i style="width:6px">f</i><i style="width:6px">z</i><i style="width:6px">h</i></div>
</div>
<div class="t" style="left:1083px;top:269px;">三室二厅</div>
<div class="sm" style="left:1171px;top:268px;font-size:12px;line-height:14px;"><i style="width:6px">1</i><i style="width:6px">1</i><i style="width:6px">5</i></div>
<div style="left:1193px;top:127px;width:17px;height:167px;border:1px solid #6f6f6f;border-right-color:#c0c0c0;border-bottom-color:#c0c0c0;background:linear-gradient(90deg,#c8c8c8 0,#d4d4d4 40%,#ececec 100%)"></div>
<div style="left:1195px;top:131px;width:13px;height:12px;border:1px solid #888;border-radius:2px;background:linear-gradient(#e8e8e8,#fdfdfd 30%,#f4f4f4)"><svg width="11" height="10" style="position:absolute;left:0;top:0"><path d="M2.5 7 L5.5 3.5 L8.5 7 Z" fill="#000"/></svg></div>
<div style="left:1194px;top:144px;width:15px;height:8px;background:linear-gradient(#888 0,#888 1px,#fafafa 2px,#e0e0e0 6px,#888 7px)"></div>
<div style="left:1195px;top:278px;width:13px;height:12px;border:1px solid #888;border-radius:2px;background:linear-gradient(#f4f4f4,#fdfdfd 60%,#d8d8d8)"><svg width="11" height="10" style="position:absolute;left:0;top:0"><path d="M2.5 3.5 L5.5 7 L8.5 3.5 Z" fill="#000"/></svg></div>
<div class="grp" style="left:299px;top:306px;width:912px;height:341px;"></div>
<div class="t lbl" style="left:305px;top:302px;">费用信息</div>
<div class="t b" style="left:306px;top:318px;font-size:14.5px;line-height:17px;letter-spacing:1.1px">帐单号：</div>
<div class="sm" style="left:364px;top:316px;font-size:14.5px;line-height:18px;font-weight:bold;color:#00f;"><i style="width:7.9px;transform:scaleX(0.980)">S</i><i style="width:7.9px;transform:scaleX(0.892)">F</i><i style="width:7.9px">2</i><i style="width:7.9px">0</i><i style="width:7.9px">2</i><i style="width:7.9px">3</i><i style="width:7.9px">0</i><i style="width:7.9px">5</i><i style="width:7.9px">1</i><i style="width:7.9px">3</i><i style="width:7.9px">0</i><i style="width:7.9px">0</i><i style="width:7.9px">0</i><i style="width:7.9px">0</i><i style="width:7.9px">0</i><i style="width:7.9px">1</i></div>
<div class="t b" style="left:510px;top:318px;font-size:14.5px;line-height:17px;letter-spacing:1.1px">业主姓名：</div>
<div class="t b" style="left:588px;top:318px;font-size:14.5px;line-height:17px;color:#00f">李巍</div>
<div class="t b" style="left:719px;top:318px;font-size:14.5px;line-height:17px;letter-spacing:1.1px">门牌号：</div>
<div class="sm" style="left:780px;top:316px;font-size:14.5px;line-height:18px;font-weight:bold;color:#00f;"><i style="width:8px">J</i><i style="width:8px">2</i><i style="width:8px">–</i><i style="width:8px">1</i><i style="width:8px">–</i><i style="width:8px">1</i><i style="width:8px">0</i><i style="width:8px">3</i></div>
<div class="t b" style="left:943px;top:318px;font-size:14.5px;line-height:17px;letter-spacing:1.1px">账户余额：</div>
<div class="sm" style="left:1020px;top:317px;font-size:16px;line-height:18px;font-weight:bold;color:#00f;"><i style="width:8.6px">0</i><i style="width:8.6px">.</i><i style="width:8.6px">0</i><i style="width:8.6px">0</i></div>
<div class="grp" style="left:312px;top:342px;width:307px;height:34px;"></div>
<div class="t lbl" style="left:318px;top:338px;">月份</div>
<div style="left:320px;top:355px;width:14px;height:14px;border:1.6px solid #d0913c;border-radius:50%;background:radial-gradient(circle at 40% 40%,#fff 0,#fff 40%,#e4e4e4 100%)"><div style="left:3.4px;top:3.4px;width:4.4px;height:4.4px;border-radius:50%;background:#000"></div></div>
<div class="t" style="left:336px;top:354px;">所有月份</div>
<div style="left:392px;top:355px;width:14px;height:14px;border:1.6px solid #d0913c;border-radius:50%;background:radial-gradient(circle at 40% 40%,#fff 0,#fff 40%,#e4e4e4 100%)"></div>
<div class="t" style="left:408px;top:354px;">指定月份</div>
<div class="inp" style="left:459px;top:350px;width:66px;height:20px;"><div style="left:1px;top:1px;width:45px;height:16px;background:#ececec"></div><div class="t" style="left:3px;top:2px;color:#808080;font-size:11.5px;letter-spacing:-0.3px">2023-05</div><svg width="10" height="6" style="position:absolute;left:52px;top:7px"><path d="M0.5 0.5 H8.5 L4.5 5 Z" fill="#3b5f8a"/></svg></div>
<div class="t" style="left:529px;top:354px;">至</div>
<div class="inp" style="left:546px;top:350px;width:66px;height:20px;"><div style="left:1px;top:1px;width:45px;height:16px;background:#ececec"></div><div class="t" style="left:3px;top:2px;color:#808080;font-size:11.5px;letter-spacing:-0.3px">2023-05</div><svg width="10" height="6" style="position:absolute;left:52px;top:7px"><path d="M0.5 0.5 H8.5 L4.5 5 Z" fill="#3b5f8a"/></svg></div>
<div class="grp" style="left:623px;top:342px;width:300px;height:34px;"></div>
<div class="t lbl" style="left:629px;top:338px;">费项</div>
<div style="left:630px;top:354px;width:14px;height:14px;border:1.6px solid #d0913c;border-radius:50%;background:radial-gradient(circle at 40% 40%,#fff 0,#fff 40%,#e4e4e4 100%)"><div style="left:3.4px;top:3.4px;width:4.4px;height:4.4px;border-radius:50%;background:#000"></div></div>
<div class="t" style="left:646px;top:354px;">所有费项</div>
<div style="left:710px;top:354px;width:14px;height:14px;border:1.6px solid #d0913c;border-radius:50%;background:radial-gradient(circle at 40% 40%,#fff 0,#fff 40%,#e4e4e4 100%)"></div>
<div class="t" style="left:726px;top:354px;">指定费项</div>
<div class="inp" style="left:782px;top:351px;width:127px;height:20px;"><div style="left:1px;top:1px;width:105px;height:16px;background:#ececec"></div><div class="t" style="left:3px;top:2px;color:#808080;">物业费</div><svg width="10" height="6" style="position:absolute;left:113px;top:7px"><path d="M0.5 0.5 H8.5 L4.5 5 Z" fill="#3b5f8a"/></svg></div>
<div class="gbtn" style="left:946px;top:343px;width:90px;height:30px;line-height:29px">全部选择</div>
<div class="gbtn" style="left:1061px;top:343px;width:90px;height:30px;line-height:29px">全部取消</div>
<div class="hdr" style="left:300px;top:383px;width:910px;height:20px;"></div>
<div class="t" style="left:300px;top:386px;width:34px;text-align:center">交费</div>
<div class="sep" style="left:334px;top:385px;width:1px;height:14px;"></div>
<div style="left:335px;top:385px;width:1px;height:14px;background:rgba(255,255,255,0.8)"></div>
<div class="t" style="left:334px;top:386px;width:96px;text-align:center">费项名称</div>
<div class="sep" style="left:430px;top:385px;width:1px;height:14px;"></div>
<div style="left:431px;top:385px;width:1px;height:14px;background:rgba(255,255,255,0.8)"></div>
<div class="t" style="left:430px;top:386px;width:60px;text-align:center">计费单价</div>
<div class="sep" style="left:490px;top:385px;width:1px;height:14px;"></div>
<div style="left:491px;top:385px;width:1px;height:14px;background:rgba(255,255,255,0.8)"></div>
<div class="t" style="left:490px;top:386px;width:70px;text-align:center">费项周期</div>
<div class="sep" style="left:560px;top:385px;width:1px;height:14px;"></div>
<div style="left:561px;top:385px;width:1px;height:14px;background:rgba(255,255,255,0.8)"></div>
<div class="t" style="left:560px;top:386px;width:59px;text-align:center">本次用量</div>
<div class="sep" style="left:619px;top:385px;width:1px;height:14px;"></div>
<div style="left:620px;top:385px;width:1px;height:14px;background:rgba(255,255,255,0.8)"></div>
<div class="t" style="left:619px;top:386px;width:57px;text-align:center">累计用量</div>
<div class="sep" style="left:676px;top:385px;width:1px;height:14px;"></div>
<div style="left:677px;top:385px;width:1px;height:14px;background:rgba(255,255,255,0.8)"></div>
<div class="t" style="left:676px;top:386px;width:78px;text-align:center">费用金额</div>
<div class="sep" style="left:754px;top:385px;width:1px;height:14px;"></div>
<div style="left:755px;top:385px;width:1px;height:14px;background:rgba(255,255,255,0.8)"></div>
<div class="t" style="left:754px;top:386px;width:59px;text-align:center">滞纳金</div>
<div class="sep" style="left:813px;top:385px;width:1px;height:14px;"></div>
<div style="left:814px;top:385px;width:1px;height:14px;background:rgba(255,255,255,0.8)"></div>
<div class="t" style="left:813px;top:386px;width:70px;text-align:center">起收日期</div>
<div class="sep" style="left:883px;top:385px;width:1px;height:14px;"></div>
<div style="left:884px;top:385px;width:1px;height:14px;background:rgba(255,255,255,0.8)"></div>
<div class="t" style="left:883px;top:386px;width:67px;text-align:center">到期日期</div>
<div class="sep" style="left:950px;top:385px;width:1px;height:14px;"></div>
<div style="left:951px;top:385px;width:1px;height:14px;background:rgba(255,255,255,0.8)"></div>
<div class="t" style="left:950px;top:386px;width:67px;text-align:center">交费限期</div>
<div class="sep" style="left:1017px;top:385px;width:1px;height:14px;"></div>
<div style="left:1018px;top:385px;width:1px;height:14px;background:rgba(255,255,255,0.8)"></div>
<div class="t" style="left:1017px;top:386px;width:46px;text-align:center">记录人</div>
<div class="sep" style="left:1063px;top:385px;width:1px;height:14px;"></div>
<div style="left:1064px;top:385px;width:1px;height:14px;background:rgba(255,255,255,0.8)"></div>
<div class="t" style="left:1063px;top:386px;width:147px;text-align:center">抄表档案</div>
<div style="left:300px;top:403px;width:910px;height:17px;background:#fff"></div>
<div style="left:300px;top:403px;width:34px;height:17px;background:#efefef"></div>
<div style="left:300px;top:419px;width:910px;height:1px;background:#fbdfbf"></div>
<div style="left:334px;top:403px;width:1px;height:17px;background:#fbdfbf"></div>
<div style="left:430px;top:403px;width:1px;height:17px;background:#fbdfbf"></div>
<div style="left:490px;top:403px;width:1px;height:17px;background:#fbdfbf"></div>
<div style="left:560px;top:403px;width:1px;height:17px;background:#fbdfbf"></div>
<div style="left:619px;top:403px;width:1px;height:17px;background:#fbdfbf"></div>
<div style="left:676px;top:403px;width:1px;height:17px;background:#fbdfbf"></div>
<div style="left:754px;top:403px;width:1px;height:17px;background:#fbdfbf"></div>
<div style="left:813px;top:403px;width:1px;height:17px;background:#fbdfbf"></div>
<div style="left:883px;top:403px;width:1px;height:17px;background:#fbdfbf"></div>
<div style="left:950px;top:403px;width:1px;height:17px;background:#fbdfbf"></div>
<div style="left:1017px;top:403px;width:1px;height:17px;background:#fbdfbf"></div>
<div style="left:1063px;top:403px;width:1px;height:17px;background:#fbdfbf"></div>
<div style="left:310px;top:404px;width:13px;height:13px;border:1px solid #9a9a9a;background:#fff"><svg width="11" height="11" style="position:absolute;left:0;top:0"><path d="M2.2 5.2 L4.6 7.8 L9 2.6" fill="none" stroke="#000" stroke-width="2"/></svg></div>
<div style="left:300px;top:403px;width:34px;height:16px;border:1px solid #000"></div>
<div class="t" style="left:336px;top:404px;">物业费</div>
<div class="sm" style="left:475px;top:403px;font-size:12px;line-height:14px;"><i style="width:6px">4</i><i style="width:6px">0</i></div>
<div class="sm" style="left:551px;top:403px;font-size:12px;line-height:14px;"><i style="width:6px">3</i></div>
<div class="sm" style="left:610px;top:403px;font-size:12px;line-height:14px;"><i style="width:6px">1</i></div>
<div class="sm" style="left:715px;top:403px;font-size:12px;line-height:14px;"><i style="width:6px">1</i><i style="width:6px">2</i><i style="width:6px">0</i><i style="width:6px">.</i><i style="width:6px">0</i><i style="width:6px">0</i></div>
<div class="sm" style="left:774px;top:403px;font-size:12px;line-height:14px;"><i style="width:6px">1</i><i style="width:6px">5</i><i style="width:6px">4</i><i style="width:6px">.</i><i style="width:6px">8</i><i style="width:6px">0</i></div>
<div class="sm" style="left:815px;top:403px;font-size:12px;line-height:14px;"><i style="width:6px">2</i><i style="width:6px">0</i><i style="width:6px">2</i><i style="width:6px">3</i><i style="width:6px">–</i><i style="width:6px">0</i><i style="width:6px">1</i><i style="width:6px">–</i><i style="width:6px">0</i><i style="width:6px">1</i></div>
<div class="sm" style="left:885px;top:403px;font-size:12px;line-height:14px;"><i style="width:6px">2</i><i style="width:6px">0</i><i style="width:6px">2</i><i style="width:6px">3</i><i style="width:6px">–</i><i style="width:6px">0</i><i style="width:6px">3</i><i style="width:6px">–</i><i style="width:6px">3</i><i style="width:6px">1</i></div>
<div class="sm" style="left:952px;top:403px;font-size:12px;line-height:14px;"><i style="width:6px">2</i><i style="width:6px">0</i><i style="width:6px">2</i><i style="width:6px">3</i><i style="width:6px">–</i><i style="width:6px">0</i><i style="width:6px">3</i><i style="width:6px">–</i><i style="width:6px">3</i><i style="width:6px">1</i></div>
<div class="sm" style="left:1019px;top:403px;font-size:12px;line-height:14px;"><i style="width:6px">a</i><i style="width:6px">d</i><i style="width:6px;transform:scaleX(0.643)">m</i><i style="width:6px">i</i><i style="width:6px">n</i></div>
<div class="t" style="left:1065px;top:404px;">物业费</div>
<div class="sm" style="left:1101px;top:403px;font-size:12px;line-height:14px;"><i style="width:6px">j</i><i style="width:6px">b</i><i style="width:6px">2</i><i style="width:6px">3</i><i style="width:6px">0</i><i style="width:6px">3</i><i style="width:6px">2</i><i style="width:6px">3</i></div>
<div style="left:300px;top:420px;width:910px;height:17px;background:#fbdfbf"></div>
<div style="left:300px;top:420px;width:34px;height:17px;background:#efefef"></div>
<div style="left:300px;top:436px;width:910px;height:1px;background:#fbdfbf"></div>
<div style="left:334px;top:420px;width:1px;height:17px;background:#fbdfbf"></div>
<div style="left:430px;top:420px;width:1px;height:17px;background:#fbdfbf"></div>
<div style="left:490px;top:420px;width:1px;height:17px;background:#fbdfbf"></div>
<div style="left:560px;top:420px;width:1px;height:17px;background:#fbdfbf"></div>
<div style="left:619px;top:420px;width:1px;height:17px;background:#fbdfbf"></div>
<div style="left:676px;top:420px;width:1px;height:17px;background:#fbdfbf"></div>
<div style="left:754px;top:420px;width:1px;height:17px;background:#fbdfbf"></div>
<div style="left:813px;top:420px;width:1px;height:17px;background:#fbdfbf"></div>
<div style="left:883px;top:420px;width:1px;height:17px;background:#fbdfbf"></div>
<div style="left:950px;top:420px;width:1px;height:17px;background:#fbdfbf"></div>
<div style="left:1017px;top:420px;width:1px;height:17px;background:#fbdfbf"></div>
<div style="left:1063px;top:420px;width:1px;height:17px;background:#fbdfbf"></div>
<div style="left:310px;top:421px;width:13px;height:13px;border:1px solid #9a9a9a;background:#fff"><svg width="11" height="11" style="position:absolute;left:0;top:0"><path d="M2.2 5.2 L4.6 7.8 L9 2.6" fill="none" stroke="#000" stroke-width="2"/></svg></div>
<div class="t" style="left:336px;top:421px;">物业费</div>
<div class="sm" style="left:475px;top:420px;font-size:12px;line-height:14px;"><i style="width:6px">4</i><i style="width:6px">0</i></div>
<div class="sm" style="left:551px;top:420px;font-size:12px;line-height:14px;"><i style="width:6px">3</i></div>
<div class="sm" style="left:610px;top:420px;font-size:12px;line-height:14px;"><i style="width:6px">1</i></div>
<div class="sm" style="left:715px;top:420px;font-size:12px;line-height:14px;"><i style="width:6px">1</i><i style="width:6px">2</i><i style="width:6px">0</i><i style="width:6px">.</i><i style="width:6px">0</i><i style="width:6px">0</i></div>
<div class="sm" style="left:786px;top:420px;font-size:12px;line-height:14px;"><i style="width:6px">0</i><i style="width:6px">.</i><i style="width:6px">0</i><i style="width:6px">0</i></div>
<div class="sm" style="left:815px;top:420px;font-size:12px;line-height:14px;"><i style="width:6px">2</i><i style="width:6px">0</i><i style="width:6px">2</i><i style="width:6px">3</i><i style="width:6px">–</i><i style="width:6px">0</i><i style="width:6px">4</i><i style="width:6px">–</i><i style="width:6px">0</i><i style="width:6px">1</i></div>
<div class="sm" style="left:885px;top:420px;font-size:12px;line-height:14px;"><i style="width:6px">2</i><i style="width:6px">0</i><i style="width:6px">2</i><i style="width:6px">3</i><i style="width:6px">–</i><i style="width:6px">0</i><i style="width:6px">6</i><i style="width:6px">–</i><i style="width:6px">3</i><i style="width:6px">0</i></div>
<div class="sm" style="left:952px;top:420px;font-size:12px;line-height:14px;"><i style="width:6px">2</i><i style="width:6px">0</i><i style="width:6px">2</i><i style="width:6px">3</i><i style="width:6px">–</i><i style="width:6px">0</i><i style="width:6px">6</i><i style="width:6px">–</i><i style="width:6px">3</i><i style="width:6px">0</i></div>
<div class="sm" style="left:1019px;top:420px;font-size:12px;line-height:14px;"><i style="width:6px">a</i><i style="width:6px">d</i><i style="width:6px;transform:scaleX(0.643)">m</i><i style="width:6px">i</i><i style="width:6px">n</i></div>
<div class="t" style="left:1065px;top:421px;">物业费</div>
<div class="sm" style="left:1101px;top:420px;font-size:12px;line-height:14px;"><i style="width:6px">j</i><i style="width:6px">b</i><i style="width:6px">2</i><i style="width:6px">3</i><i style="width:6px">0</i><i style="width:6px">3</i><i style="width:6px">2</i><i style="width:6px">7</i></div>
<div style="left:300px;top:437px;width:910px;height:17px;background:#fff"></div>
<div style="left:300px;top:437px;width:34px;height:17px;background:#efefef"></div>
<div style="left:300px;top:453px;width:910px;height:1px;background:#fbdfbf"></div>
<div style="left:334px;top:437px;width:1px;height:17px;background:#fbdfbf"></div>
<div style="left:430px;top:437px;width:1px;height:17px;background:#fbdfbf"></div>
<div style="left:490px;top:437px;width:1px;height:17px;background:#fbdfbf"></div>
<div style="left:560px;top:437px;width:1px;height:17px;background:#fbdfbf"></div>
<div style="left:619px;top:437px;width:1px;height:17px;background:#fbdfbf"></div>
<div style="left:676px;top:437px;width:1px;height:17px;background:#fbdfbf"></div>
<div style="left:754px;top:437px;width:1px;height:17px;background:#fbdfbf"></div>
<div style="left:813px;top:437px;width:1px;height:17px;background:#fbdfbf"></div>
<div style="left:883px;top:437px;width:1px;height:17px;background:#fbdfbf"></div>
<div style="left:950px;top:437px;width:1px;height:17px;background:#fbdfbf"></div>
<div style="left:1017px;top:437px;width:1px;height:17px;background:#fbdfbf"></div>
<div style="left:1063px;top:437px;width:1px;height:17px;background:#fbdfbf"></div>
<div style="left:310px;top:438px;width:13px;height:13px;border:1px solid #9a9a9a;background:#fff"><svg width="11" height="11" style="position:absolute;left:0;top:0"><path d="M2.2 5.2 L4.6 7.8 L9 2.6" fill="none" stroke="#000" stroke-width="2"/></svg></div>
<div class="t" style="left:336px;top:438px;">物业费</div>
<div class="sm" style="left:475px;top:437px;font-size:12px;line-height:14px;"><i style="width:6px">4</i><i style="width:6px">0</i></div>
<div class="sm" style="left:551px;top:437px;font-size:12px;line-height:14px;"><i style="width:6px">3</i></div>
<div class="sm" style="left:610px;top:437px;font-size:12px;line-height:14px;"><i style="width:6px">1</i></div>
<div class="sm" style="left:715px;top:437px;font-size:12px;line-height:14px;"><i style="width:6px">1</i><i style="width:6px">2</i><i style="width:6px">0</i><i style="width:6px">.</i><i style="width:6px">0</i><i style="width:6px">0</i></div>
<div class="sm" style="left:786px;top:437px;font-size:12px;line-height:14px;"><i style="width:6px">0</i><i style="width:6px">.</i><i style="width:6px">0</i><i style="width:6px">0</i></div>
<div class="sm" style="left:815px;top:437px;font-size:12px;line-height:14px;"><i style="width:6px">2</i><i style="width:6px">0</i><i style="width:6px">2</i><i style="width:6px">3</i><i style="width:6px">–</i><i style="width:6px">0</i><i style="width:6px">7</i><i style="width:6px">–</i><i style="width:6px">0</i><i style="width:6px">1</i></div>
<div class="sm" style="left:885px;top:437px;font-size:12px;line-height:14px;"><i style="width:6px">2</i><i style="width:6px">0</i><i style="width:6px">2</i><i style="width:6px">3</i><i style="width:6px">–</i><i style="width:6px">0</i><i style="width:6px">9</i><i style="width:6px">–</i><i style="width:6px">3</i><i style="width:6px">0</i></div>
<div class="sm" style="left:952px;top:437px;font-size:12px;line-height:14px;"><i style="width:6px">2</i><i style="width:6px">0</i><i style="width:6px">2</i><i style="width:6px">3</i><i style="width:6px">–</i><i style="width:6px">0</i><i style="width:6px">9</i><i style="width:6px">–</i><i style="width:6px">3</i><i style="width:6px">0</i></div>
<div class="sm" style="left:1019px;top:437px;font-size:12px;line-height:14px;"><i style="width:6px">a</i><i style="width:6px">d</i><i style="width:6px;transform:scaleX(0.643)">m</i><i style="width:6px">i</i><i style="width:6px">n</i></div>
<div class="t" style="left:1065px;top:438px;">物业费</div>
<div class="sm" style="left:1101px;top:437px;font-size:12px;line-height:14px;"><i style="width:6px">j</i><i style="width:6px">b</i><i style="width:6px">2</i><i style="width:6px">3</i><i style="width:6px">0</i><i style="width:6px">3</i><i style="width:6px">2</i><i style="width:6px">8</i></div>
<div style="left:300px;top:454px;width:910px;height:17px;background:#fbdfbf"></div>
<div style="left:300px;top:454px;width:34px;height:17px;background:#efefef"></div>
<div style="left:300px;top:470px;width:910px;height:1px;background:#fbdfbf"></div>
<div style="left:334px;top:454px;width:1px;height:17px;background:#fbdfbf"></div>
<div style="left:430px;top:454px;width:1px;height:17px;background:#fbdfbf"></div>
<div style="left:490px;top:454px;width:1px;height:17px;background:#fbdfbf"></div>
<div style="left:560px;top:454px;width:1px;height:17px;background:#fbdfbf"></div>
<div style="left:619px;top:454px;width:1px;height:17px;background:#fbdfbf"></div>
<div style="left:676px;top:454px;width:1px;height:17px;background:#fbdfbf"></div>
<div style="left:754px;top:454px;width:1px;height:17px;background:#fbdfbf"></div>
<div style="left:813px;top:454px;width:1px;height:17px;background:#fbdfbf"></div>
<div style="left:883px;top:454px;width:1px;height:17px;background:#fbdfbf"></div>
<div style="left:950px;top:454px;width:1px;height:17px;background:#fbdfbf"></div>
<div style="left:1017px;top:454px;width:1px;height:17px;background:#fbdfbf"></div>
<div style="left:1063px;top:454px;width:1px;height:17px;background:#fbdfbf"></div>
<div style="left:310px;top:455px;width:13px;height:13px;border:1px solid #9a9a9a;background:#fff"><svg width="11" height="11" style="position:absolute;left:0;top:0"><path d="M2.2 5.2 L4.6 7.8 L9 2.6" fill="none" stroke="#000" stroke-width="2"/></svg></div>
<div class="t" style="left:336px;top:455px;">物业费</div>
<div class="sm" style="left:475px;top:454px;font-size:12px;line-height:14px;"><i style="width:6px">4</i><i style="width:6px">0</i></div>
<div class="sm" style="left:551px;top:454px;font-size:12px;line-height:14px;"><i style="width:6px">3</i></div>
<div class="sm" style="left:610px;top:454px;font-size:12px;line-height:14px;"><i style="width:6px">1</i></div>
<div class="sm" style="left:715px;top:454px;font-size:12px;line-height:14px;"><i style="width:6px">1</i><i style="width:6px">2</i><i style="width:6px">0</i><i style="width:6px">.</i><i style="width:6px">0</i><i style="width:6px">0</i></div>
<div class="sm" style="left:786px;top:454px;font-size:12px;line-height:14px;"><i style="width:6px">0</i><i style="width:6px">.</i><i style="width:6px">0</i><i style="width:6px">0</i></div>
<div class="sm" style="left:815px;top:454px;font-size:12px;line-height:14px;"><i style="width:6px">2</i><i style="width:6px">0</i><i style="width:6px">2</i><i style="width:6px">3</i><i style="width:6px">–</i><i style="width:6px">1</i><i style="width:6px">0</i><i style="width:6px">–</i><i style="width:6px">0</i><i style="width:6px">1</i></div>
<div class="sm" style="left:885px;top:454px;font-size:12px;line-height:14px;"><i style="width:6px">2</i><i style="width:6px">0</i><i style="width:6px">2</i><i style="width:6px">3</i><i style="width:6px">–</i><i style="width:6px">1</i><i style="width:6px">2</i><i style="width:6px">–</i><i style="width:6px">3</i><i style="width:6px">1</i></div>
<div class="sm" style="left:952px;top:454px;font-size:12px;line-height:14px;"><i style="width:6px">2</i><i style="width:6px">0</i><i style="width:6px">2</i><i style="width:6px">3</i><i style="width:6px">–</i><i style="width:6px">1</i><i style="width:6px">2</i><i style="width:6px">–</i><i style="width:6px">3</i><i style="width:6px">1</i></div>
<div class="sm" style="left:1019px;top:454px;font-size:12px;line-height:14px;"><i style="width:6px">a</i><i style="width:6px">d</i><i style="width:6px;transform:scaleX(0.643)">m</i><i style="width:6px">i</i><i style="width:6px">n</i></div>
<div class="t" style="left:1065px;top:455px;">物业费</div>
<div class="sm" style="left:1101px;top:454px;font-size:12px;line-height:14px;"><i style="width:6px">j</i><i style="width:6px">b</i><i style="width:6px">2</i><i style="width:6px">3</i><i style="width:6px">0</i><i style="width:6px">3</i><i style="width:6px">2</i><i style="width:6px">9</i></div>
<div style="left:300px;top:471px;width:910px;height:17px;background:#fff"></div>
<div style="left:300px;top:471px;width:34px;height:17px;background:#efefef"></div>
<div style="left:300px;top:487px;width:910px;height:1px;background:#fbdfbf"></div>
<div style="left:334px;top:471px;width:1px;height:17px;background:#fbdfbf"></div>
<div style="left:430px;top:471px;width:1px;height:17px;background:#fbdfbf"></div>
<div style="left:490px;top:471px;width:1px;height:17px;background:#fbdfbf"></div>
<div style="left:560px;top:471px;width:1px;height:17px;background:#fbdfbf"></div>
<div style="left:619px;top:471px;width:1px;height:17px;background:#fbdfbf"></div>
<div style="left:676px;top:471px;width:1px;height:17px;background:#fbdfbf"></div>
<div style="left:754px;top:471px;width:1px;height:17px;background:#fbdfbf"></div>
<div style="left:813px;top:471px;width:1px;height:17px;background:#fbdfbf"></div>
<div style="left:883px;top:471px;width:1px;height:17px;background:#fbdfbf"></div>
<div style="left:950px;top:471px;width:1px;height:17px;background:#fbdfbf"></div>
<div style="left:1017px;top:471px;width:1px;height:17px;background:#fbdfbf"></div>
<div style="left:1063px;top:471px;width:1px;height:17px;background:#fbdfbf"></div>
<div style="left:310px;top:472px;width:13px;height:13px;border:1px solid #9a9a9a;background:#fff"><svg width="11" height="11" style="position:absolute;left:0;top:0"><path d="M2.2 5.2 L4.6 7.8 L9 2.6" fill="none" stroke="#000" stroke-width="2"/></svg></div>
<div class="t" style="left:336px;top:472px;">已收物业费</div>
<div class="sm" style="left:475px;top:471px;font-size:12px;line-height:14px;"><i style="width:6px">4</i><i style="width:6px">0</i></div>
<div class="sm" style="left:551px;top:471px;font-size:12px;line-height:14px;"><i style="width:6px">1</i></div>
<div class="sm" style="left:610px;top:471px;font-size:12px;line-height:14px;"><i style="width:6px">0</i></div>
<div class="sm" style="left:709px;top:471px;font-size:12px;line-height:14px;"><i style="width:6px">1</i><i style="width:6px">1</i><i style="width:6px">6</i><i style="width:6px">0</i><i style="width:6px">.</i><i style="width:6px">0</i><i style="width:6px">0</i></div>
<div class="sm" style="left:786px;top:471px;font-size:12px;line-height:14px;"><i style="width:6px">0</i><i style="width:6px">.</i><i style="width:6px">0</i><i style="width:6px">0</i></div>
<div class="sm" style="left:815px;top:471px;font-size:12px;line-height:14px;"><i style="width:6px">2</i><i style="width:6px">0</i><i style="width:6px">2</i><i style="width:6px">0</i><i style="width:6px">–</i><i style="width:6px">0</i><i style="width:6px">8</i><i style="width:6px">–</i><i style="width:6px">0</i><i style="width:6px">1</i></div>
<div class="sm" style="left:885px;top:471px;font-size:12px;line-height:14px;"><i style="width:6px">2</i><i style="width:6px">0</i><i style="width:6px">2</i><i style="width:6px">2</i><i style="width:6px">–</i><i style="width:6px">1</i><i style="width:6px">2</i><i style="width:6px">–</i><i style="width:6px">3</i><i style="width:6px">1</i></div>
<div class="sm" style="left:1019px;top:471px;font-size:12px;line-height:14px;"><i style="width:6px">a</i><i style="width:6px">d</i><i style="width:6px;transform:scaleX(0.643)">m</i><i style="width:6px">i</i><i style="width:6px">n</i></div>
<div class="t" style="left:1065px;top:472px;">已收物业费</div>
<div class="sm" style="left:1125px;top:471px;font-size:12px;line-height:14px;"><i style="width:6px">q</i><i style="width:6px">f</i><i style="width:6px">2</i><i style="width:6px">3</i><i style="width:6px">0</i><i style="width:6px">3</i><i style="width:6px">2</i><i style="width:6px">3</i></div>
<div style="left:300px;top:624px;width:910px;height:22px;background:linear-gradient(#9a9a9a 0,#9a9a9a 1px,#fafafa 2px,#e6e6e6 30%,#d2d2d2 60%,#cacaca 100%)"></div>
<div class="t" style="left:377px;top:628px;font-size:11px">5</div>
<div class="sep" style="left:430px;top:628px;width:1px;height:14px;"></div>
<div class="sm" style="left:709px;top:628px;font-size:11px;line-height:14px;color:#f00;"><i style="width:6px">1</i><i style="width:6px">6</i><i style="width:6px">4</i><i style="width:6px">0</i><i style="width:6px">.</i><i style="width:6px">0</i><i style="width:6px">0</i></div>
<div class="sep" style="left:754px;top:628px;width:1px;height:14px;"></div>
<div class="sm" style="left:774px;top:628px;font-size:11px;line-height:14px;color:#f00;"><i style="width:6px">1</i><i style="width:6px">5</i><i style="width:6px">4</i><i style="width:6px">.</i><i style="width:6px">8</i><i style="width:6px">0</i></div>
<div class="sep" style="left:813px;top:628px;width:1px;height:14px;"></div>
<div class="t b" style="left:304px;top:656px;font-size:13px;line-height:15px">选定笔数：</div>
<div class="sm" style="left:368px;top:655px;font-size:16px;line-height:18px;font-weight:bold;color:#00f;"><i style="width:8.9px">5</i></div>
<div class="t b" style="left:304px;top:680px;font-size:13px;line-height:15px">选定金额：</div>
<div class="sm" style="left:368px;top:679px;font-size:16px;line-height:18px;font-weight:bold;color:#00f;"><i style="width:8.9px">1</i><i style="width:8.9px">6</i><i style="width:8.9px">4</i><i style="width:8.9px">0</i><i style="width:8.9px">.</i><i style="width:8.9px">0</i><i style="width:8.9px">0</i><i style="width:8.9px">0</i><i style="width:8.9px">0</i></div>
<div class="t b" style="left:304px;top:704px;font-size:13px;line-height:15px">滞纳金额：</div>
<div class="sm" style="left:368px;top:703px;font-size:16px;line-height:18px;font-weight:bold;color:#00f;"><i style="width:8.9px">1</i><i style="width:8.9px">5</i><i style="width:8.9px">4</i><i style="width:8.9px">.</i><i style="width:8.9px">8</i><i style="width:8.9px">0</i><i style="width:8.9px">0</i><i style="width:8.9px">0</i></div>
<div style="left:476px;top:650px;width:1px;height:80px;background:#a0a0a0"></div>
<div class="t b" style="left:482px;top:663px;font-size:17px;line-height:19px">应收合计：</div>
<div class="sm" style="left:560px;top:661px;font-size:20px;line-height:22px;color:#800000;-webkit-text-stroke:0.35px currentColor"><i style="width:11.1px">1</i><i style="width:11.1px">7</i><i style="width:11.1px">9</i><i style="width:11.1px">4</i><i style="width:11.1px">.</i><i style="width:11.1px">8</i><i style="width:11.1px">0</i><i style="width:11.1px">0</i><i style="width:11.1px">0</i></div>
<div class="t b" style="left:482px;top:695px;font-size:17px;line-height:19px">优惠金额：</div>
<div class="sm" style="left:562px;top:694px;font-size:20px;line-height:22px;color:#f00;-webkit-text-stroke:0.35px currentColor"><i style="width:11.1px">7</i><i style="width:11.1px">1</i><i style="width:11.1px">7</i><i style="width:11.1px">.</i><i style="width:11.1px">8</i><i style="width:11.1px">0</i></div>
<div style="left:718px;top:650px;width:1px;height:80px;background:#a0a0a0"></div>
<div class="t" style="left:727px;top:660px;font-size:18px;line-height:20px;letter-spacing:3.3px;font-weight:600">实际应收：</div>
<div class="sm" style="left:726px;top:688px;font-size:26px;line-height:30px;color:#800000;-webkit-text-stroke:0.35px currentColor"><i style="width:15px">1</i><i style="width:15px">0</i><i style="width:15px">7</i><i style="width:15px">7</i><i style="width:15px">.</i><i style="width:15px">0</i><i style="width:15px">0</i><i style="width:15px">0</i><i style="width:15px">0</i></div>
<div style="left:704px;top:605px;width:179px;height:130px;border:3px solid #ee3535"></div>
<div style="left:898px;top:651px;width:1px;height:79px;background:#a0a0a0"></div>
<div class="t" style="left:905px;top:653px;">欠费笔数：</div>
<div class="sm" style="left:967px;top:651px;font-size:16px;line-height:18px;font-weight:bold;color:#00f;"><i style="width:8.9px">5</i></div>
<div class="t" style="left:1000px;top:653px;">欠费金额：</div>
<div class="sm" style="left:1057px;top:651px;font-size:16px;line-height:18px;font-weight:bold;color:#00f;"><i style="width:8.9px">1</i><i style="width:8.9px">6</i><i style="width:8.9px">4</i><i style="width:8.9px">0</i><i style="width:8.9px">.</i><i style="width:8.9px">0</i><i style="width:8.9px">0</i><i style="width:8.9px">0</i><i style="width:8.9px">0</i></div>
<div class="bbtn" style="left:906px;top:681px;width:80px;height:39px;"><div class="t b" style="left:0;top:12px;width:78px;text-align:center;line-height:14px">收款<span class="sm" style="font-weight:bold"><i style="width:6.8px">[</i><i style="width:6.8px;transform:scaleX(0.891)">F</i><i style="width:6.8px">5</i><i style="width:6.8px">]</i></span></div></div>
<div class="bbtn" style="left:1007px;top:681px;width:80px;height:39px;"><div class="t b" style="left:0;top:12px;width:78px;text-align:center;line-height:14px">优惠<span class="sm" style="font-weight:bold"><i style="width:6.8px">[</i><i style="width:6.8px;transform:scaleX(0.891)">F</i><i style="width:6.8px">6</i><i style="width:6.8px">]</i></span></div></div>
<div class="bbtn" style="left:1107px;top:681px;width:80px;height:39px;"><div class="t b" style="left:0;top:12px;width:78px;text-align:center;line-height:14px">取消<span class="sm" style="font-weight:bold"><i style="width:6.8px">[</i><i style="width:6.8px;transform:scaleX(0.816)">E</i><i style="width:6.8px">s</i><i style="width:6.8px">c</i><i style="width:6.8px">]</i></span></div></div>
</body></html>
